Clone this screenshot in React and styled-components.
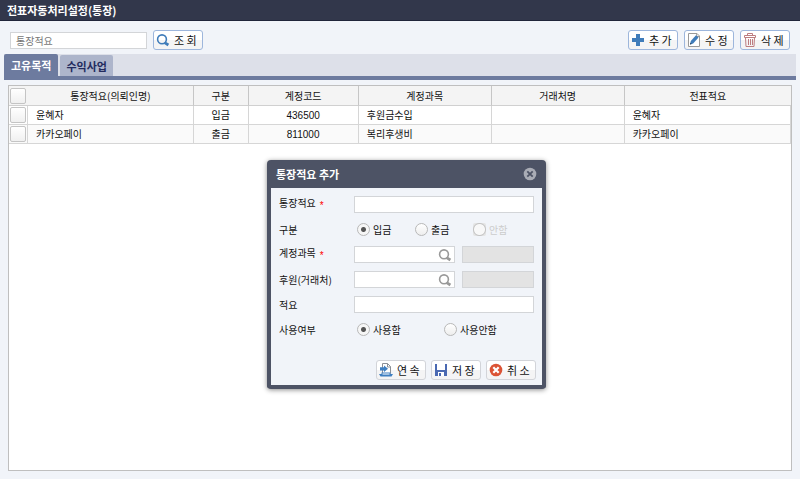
import React, { useState } from 'react';
import styled, { createGlobalStyle, css } from 'styled-components';


////////// global //////////

const GlobalStyle = createGlobalStyle`
  * {
    box-sizing:border-box;
  }
  body {
    margin:0;
    background:#f1f4f9;
    color:#111;
    font-family:'Noto Sans CJK KR', sans-serif;
    font-size:10px;
    line-height:14px;
  }
  button, input {
    font-family:inherit;
    font-size:inherit;
    line-height:inherit;
    color:inherit;
  }
`;


////////// page //////////

const Page = styled.div`
  position:relative;
  display:flex;
  flex-direction:column;
  min-height:100vh;
`;

const TitleBar = styled.header`
  height:21px;
  padding:0 7px;
  background:#32374b;
  border-bottom:1px solid #20253a;
`;

const PageTitle = styled.h1`
  margin:0;
  color:#fff;
  font-size:11px;
  font-weight:700;
  line-height:20px;
`;


////////// toolbar //////////

const Toolbar = styled.div`
  display:flex;
  align-items:center;
  gap:6px;
  padding:9px 10px 4px;
`;

const fieldBox = css`
  height:17px;
  padding:0 5px;
  border:1px solid #d3d5d8;
  border-radius:0;
  background:#fff;
  outline:none;
`;

const SearchInput = styled.input`
  ${fieldBox}
  width:137px;
  &::placeholder {
    color:#777;
    opacity:1;
  }
`;

const ToolbarActions = styled.div`
  display:flex;
  gap:6px;
  margin-left:auto;
`;

const Button = styled.button`
  display:flex;
  align-items:center;
  gap:4px;
  width:50px;
  height:20px;
  padding:0 0 0 2px;
  border:1px solid ${p => (p.$plain ? '#d2d4d9' : '#9db6dc')};
  border-radius:3px;
  background:linear-gradient(#fff 50%, #f4f4f5 50%);
  font-size:11px;
  white-space:nowrap;
  cursor:pointer;
`;


////////// tabs //////////

const TabList = styled.div`
  display:flex;
  align-items:flex-end;
  gap:2px;
  height:26px;
  margin:0 4px;
  background:#dde0e9;
  border-bottom:4px solid #6d7b9f;
`;

const Tab = styled.button`
  height:${p => (p.$active ? 22 : 21)}px;
  padding:0 ${p => (p.$active ? 7 : 6)}px;
  border:0;
  border-radius:2px 2px 0 0;
  background:${p => (p.$active ? '#6d7b9f' : '#adb5cb')};
  color:${p => (p.$active ? '#fff' : '#232b5e')};
  font-size:11px;
  font-weight:700;
  cursor:pointer;
`;


////////// grid //////////

const GridPanel = styled.main`
  flex:1;
  margin:5px 8px 8px;
  border:1px solid #bfbfbf;
  background:#fff;
`;

const GridTable = styled.table`
  width:100%;
  table-layout:fixed;
  border-collapse:separate;
  border-spacing:0;
`;

const Col = styled.col`
  width:${p => p.$width};
`;

const HeadCell = styled.th`
  height:20px;
  padding:0;
  border-right:${p => (p.$bare ? 0 : '1px solid #c6c6c6')};
  border-bottom:1px solid #d0d0d0;
  background:#f4f4f4;
  font-weight:400;
`;

const Row = styled.tr`
  background:${p => (p.$odd ? '#fafafa' : '#fff')};
`;

const Cell = styled.td`
  height:19px;
  padding:0 8px;
  border-right:1px solid #d6d6d6;
  border-bottom:1px solid #d6d6d6;
  text-align:${p => (p.$center ? 'center' : 'left')};
  &:first-child {
    padding:0;
  }
`;

const Code = styled.span`
  font-family:'Liberation Sans', sans-serif;
`;

const Check = styled.input.attrs({ type: 'checkbox' })`
  appearance:none;
  display:block;
  width:16px;
  height:16px;
  margin:1px;
  border:1px solid #c4c4c4;
  border-radius:2px;
  background:linear-gradient(#fff, #f0f0f0);
  &:checked {
    background:#6d7b9f;
  }
`;


////////// dialog //////////

const Dialog = styled.section`
  position:absolute;
  top:160px;
  left:calc(50% - 133px);
  width:279px;
  border:4px solid #4d5365;
  border-top-width:0;
  border-radius:4px;
  background:#f1f4f9;
  box-shadow:0 1px 5px rgba(0, 0, 0, 0.45);
`;

const DialogHeader = styled.div`
  display:flex;
  align-items:center;
  justify-content:space-between;
  height:28px;
  padding:0 5px;
  background:#4d5365;
`;

const DialogTitle = styled.h2`
  margin:0;
  color:#fff;
  font-size:11px;
  font-weight:700;
`;

const CloseButton = styled.button`
  display:flex;
  padding:0;
  border:0;
  background:none;
  cursor:pointer;
`;

const Form = styled.form`
  display:flex;
  flex-direction:column;
  gap:8px;
  padding:8px 8px 5px;
`;

const FormRow = styled.div`
  display:grid;
  grid-template-columns:75px 1fr;
  align-items:center;
  height:17px;
`;

const Required = styled.span`
  margin-left:4px;
  color:#f00;
  font-family:'Liberation Sans', sans-serif;
  vertical-align:-2px;
`;

const TextInput = styled.input`
  ${fieldBox}
  width:100%;
`;

const LookupRow = styled.div`
  display:grid;
  grid-template-columns:101px 1fr;
  gap:7px;
`;

const LookupBox = styled.div`
  ${fieldBox}
  display:flex;
  align-items:center;
  padding-right:2px;
`;

const LookupInput = styled.input`
  flex:1;
  min-width:0;
  height:15px;
  padding:0;
  border:0;
  background:none;
  outline:none;
`;

const LookupButton = styled(CloseButton)``;

const ReadOnlyInput = styled(TextInput)`
  &:disabled {
    background:#e3e3e3;
  }
`;

const RadioGroup = styled.div`
  display:grid;
  grid-template-columns:${p => p.$columns};
  padding-left:3px;
`;

const RadioLabel = styled.label`
  display:flex;
  align-items:center;
  gap:3px;
  color:${p => (p.$disabled ? '#ccc' : 'inherit')};
`;

const Radio = styled.input.attrs({ type: 'radio' })`
  appearance:none;
  width:13px;
  height:13px;
  margin:0;
  border:1px solid #b8b8b8;
  border-radius:50%;
  background:linear-gradient(#fff, #eee);
  &:checked {
    background:radial-gradient(circle, #555 2px, #f6f6f6 3px);
  }
  &:disabled {
    border:0;
    border-radius:2px;
    background:radial-gradient(circle, #f8f8f8 5px, #c4c4c4 6px, #e4e4e4 7px);
  }
`;

const DialogActions = styled.div`
  display:flex;
  justify-content:flex-end;
  gap:5px;
  margin:14px -2px 0 0;
`;


////////// icons //////////

const IconSvg = styled.svg`
  flex:none;
  display:block;
  width:14px;
  height:14px;
`;

const SearchIcon = ({ color }) => (
  <IconSvg viewBox='0 0 14 14' fill='none' stroke={color}>
    <circle cx='6' cy='6.3' r='4.4' strokeWidth='1.6' />
    <path d='M8.6 9.6L12.4 12' strokeWidth='2.8' />
  </IconSvg>
)

const PlusIcon = () => (
  <IconSvg viewBox='0 0 14 14'>
    <path d='M5 1h4v4h4v4H9v4H5V9H1V5h4z' fill='#3f7cba' />
  </IconSvg>
)

const EditIcon = () => (
  <IconSvg viewBox='0 0 14 14'>
    <path d='M1.5 .5h8.5l2.5 2.5v10.5h-11z' fill='#fff' stroke='#999' />
    <path d='M9.7 .5v3h3' fill='none' stroke='#999' />
    <path d='M3 11.5l.8-3.5L9 2.3l2.5 2.2-5.3 6z' fill='#3f7cba' />
    <path d='M3 11.5l.5-1.8 1.2 1.2z' fill='#234' />
  </IconSvg>
)

const TrashIcon = () => (
  <IconSvg viewBox='0 0 14 14' fill='none' stroke='#bd7d80'>
    <path d='M4.5 2.5v-2h5v2M1.5 2.5h11v2h-11zM2.5 4.5l.5 9h8l.5-9M5.5 6v6M7.5 6v6M9.5 6v6' />
  </IconSvg>
)

const RepeatIcon = () => (
  <IconSvg viewBox='0 0 14 14'>
    <path d='M3.5 .5h5l3 3v7h-8z' fill='#fff' stroke='#8a8f96' />
    <path d='M8.5 .5v3.5h3' fill='none' stroke='#8a8f96' />
    <path d='M1 4.2h4V2.6l4 3.2-4 3.2V7.4H1z' fill='#3f7fc1' />
    <path d='M0 11h2.5V9.5h9V11H14l-1.5 2.5h-11z' fill='#3f7fc1' />
    <path d='M3.5 11h7' stroke='#fff' />
  </IconSvg>
)

const SaveIcon = () => (
  <IconSvg viewBox='0 0 14 14'>
    <path d='M1 1h12v12H1z' fill='#4a69b2' />
    <path d='M3 1h8v6H3zM4 9h6v4H4z' fill='#fff' />
    <path d='M5 10h2v3H5z' fill='#4a69b2' />
  </IconSvg>
)

const CrossIcon = ({ fill, stroke, width }) => (
  <IconSvg viewBox='0 0 14 14'>
    <circle cx='7' cy='7' r='6.3' fill={fill} />
    <path d='M4.3 4.3l5.4 5.4M9.7 4.3L4.3 9.7' stroke={stroke} strokeWidth={width} />
  </IconSvg>
)


////////// data //////////

const tabs = ['고유목적', '수익사업'];

const columns = [
  { label: '통장적요(의뢰인명)', width: '21.2%' },
  { label: '구분', width: '7%' },
  { label: '계정코드', width: '14.1%' },
  { label: '계정과목', width: '17%' },
  { label: '거래처명', width: '17%' },
  { label: '전표적요', width: 'auto' },
];

const rows = [
  { name: '윤혜자', type: '입금', code: '436500', account: '후원금수입', client: '', memo: '윤혜자' },
  { name: '카카오페이', type: '출금', code: '811000', account: '복리후생비', client: '', memo: '카카오페이' },
];


////////// grid view //////////

const Grid = () => (
  <GridTable>
    <colgroup>
      <Col $width='19px' />
      {columns.map(c => <Col key={c.label} $width={c.width} />)}
    </colgroup>
    <thead>
      <tr>
        <HeadCell $bare><Check aria-label='전체 선택' /></HeadCell>
        {columns.map((c, i) => (
          <HeadCell key={c.label} $bare={i === columns.length - 1}>{c.label}</HeadCell>
        ))}
      </tr>
    </thead>
    <tbody>
      {rows.map((r, i) => (
        <Row key={r.code} $odd={i % 2 === 1}>
          <Cell><Check aria-label={r.name} /></Cell>
          <Cell>{r.name}</Cell>
          <Cell $center>{r.type}</Cell>
          <Cell $center><Code>{r.code}</Code></Cell>
          <Cell>{r.account}</Cell>
          <Cell>{r.client}</Cell>
          <Cell>{r.memo}</Cell>
        </Row>
      ))}
    </tbody>
  </GridTable>
)


////////// dialog view //////////

const Lookup = ({ id, label }) => (
  <LookupRow>
    <LookupBox>
      <LookupInput id={id} />
      <LookupButton type='button' aria-label={`${label} 조회`}>
        <SearchIcon color='#999' />
      </LookupButton>
    </LookupBox>
    <ReadOnlyInput disabled aria-label={`${label} 이름`} />
  </LookupRow>
)

const RadioOption = ({ name, label, checked, disabled }) => (
  <RadioLabel $disabled={disabled}>
    <Radio name={name} defaultChecked={checked} disabled={disabled} />
    {label}
  </RadioLabel>
)

const AddDialog = () => (
  <Dialog role='dialog' aria-labelledby='dialog-title'>
    <DialogHeader>
      <DialogTitle id='dialog-title'>통장적요 추가</DialogTitle>
      <CloseButton type='button' aria-label='닫기'>
        <CrossIcon fill='#a9acb5' stroke='#4d5365' width='1.8' />
      </CloseButton>
    </DialogHeader>
    <Form onSubmit={e => e.preventDefault()}>
      <FormRow>
        <label htmlFor='summary'>통장적요<Required>*</Required></label>
        <TextInput id='summary' />
      </FormRow>
      <FormRow>
        <span id='type-label'>구분</span>
        <RadioGroup role='radiogroup' aria-labelledby='type-label' $columns='58px 58px 1fr'>
          <RadioOption name='type' label='입금' checked />
          <RadioOption name='type' label='출금' />
          <RadioOption name='type' label='안함' disabled />
        </RadioGroup>
      </FormRow>
      <FormRow>
        <label htmlFor='account'>계정과목<Required>*</Required></label>
        <Lookup id='account' label='계정과목' />
      </FormRow>
      <FormRow>
        <label htmlFor='client'>후원(거래처)</label>
        <Lookup id='client' label='거래처' />
      </FormRow>
      <FormRow>
        <label htmlFor='memo'>적요</label>
        <TextInput id='memo' />
      </FormRow>
      <FormRow>
        <span id='use-label'>사용여부</span>
        <RadioGroup role='radiogroup' aria-labelledby='use-label' $columns='87px 1fr'>
          <RadioOption name='use' label='사용함' checked />
          <RadioOption name='use' label='사용안함' />
        </RadioGroup>
      </FormRow>
      <DialogActions>
        <Button type='button' $plain><RepeatIcon />연 속</Button>
        <Button type='submit' $plain><SaveIcon />저 장</Button>
        <Button type='button' $plain><CrossIcon fill='#db5335' stroke='#fff' width='2.2' />취 소</Button>
      </DialogActions>
    </Form>
  </Dialog>
)


////////// app //////////

const App = () => {
  const [active, setActive] = useState(tabs[0]);

  return (
    <Page>
      <GlobalStyle />
      <TitleBar>
        <PageTitle>전표자동처리설정(통장)</PageTitle>
      </TitleBar>
      <Toolbar>
        <SearchInput placeholder='통장적요' aria-label='통장적요' />
        <Button type='button'><SearchIcon color='#3f7cba' />조 회</Button>
        <ToolbarActions>
          <Button type='button'><PlusIcon />추 가</Button>
          <Button type='button'><EditIcon />수 정</Button>
          <Button type='button'><TrashIcon />삭 제</Button>
        </ToolbarActions>
      </Toolbar>
      <TabList role='tablist'>
        {tabs.map(t => (
          <Tab key={t} type='button' role='tab' aria-selected={t === active} $active={t === active} onClick={() => setActive(t)}>
            {t}
          </Tab>
        ))}
      </TabList>
      <GridPanel>
        <Grid />
      </GridPanel>
      <AddDialog />
    </Page>
  )
}

export default App;
